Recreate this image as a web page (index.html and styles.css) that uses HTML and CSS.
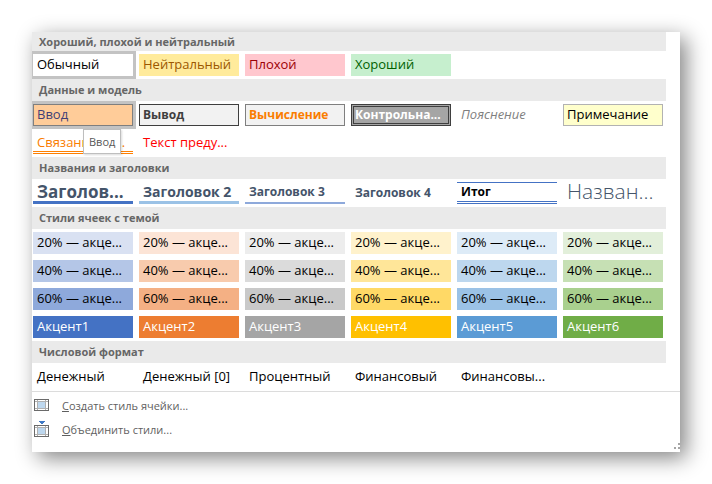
FILE: index.html
```html
<!DOCTYPE html>
<html lang="ru">
<head>
    <meta charset="UTF-8">
    <meta name="viewport" content="width=device-width, initial-scale=1.0">
    <title>Стили ячеек</title>
    <link rel="stylesheet" href="styles.css">
</head>
<body>
    <div class="panel">
        <div class="gallery">
            <h2 class="heading">Хороший, плохой и нейтральный</h2>
            <div class="grid">
                <button type="button" class="cell normal selected">Обычный</button>
                <button type="button" class="cell neutral">Нейтральный</button>
                <button type="button" class="cell bad">Плохой</button>
                <button type="button" class="cell good">Хороший</button>
            </div>

            <h2 class="heading">Данные и модель</h2>
            <div class="grid">
                <div class="cell-wrap">
                    <button type="button" class="cell input selected" aria-describedby="tip">Ввод</button>
                    <span class="tooltip" id="tip" role="tooltip">Ввод</span>
                </div>
                <button type="button" class="cell output">Вывод</button>
                <button type="button" class="cell calc">Вычисление</button>
                <button type="button" class="cell check">Контрольна...</button>
                <button type="button" class="cell explain">Пояснение</button>
                <button type="button" class="cell note">Примечание</button>
                <button type="button" class="cell linked">Связанная я...</button>
                <button type="button" class="cell warning">Текст преду...</button>
            </div>

            <h2 class="heading">Названия и заголовки</h2>
            <div class="grid">
                <button type="button" class="cell title title1">Заголов...</button>
                <button type="button" class="cell title title2">Заголовок 2</button>
                <button type="button" class="cell title title3">Заголовок 3</button>
                <button type="button" class="cell title title4">Заголовок 4</button>
                <button type="button" class="cell total">Итог</button>
                <button type="button" class="cell name">Назван...</button>
            </div>

            <h2 class="heading">Стили ячеек с темой</h2>
            <div class="grid">
                <button type="button" class="cell blue-20">20% — акце...</button>
                <button type="button" class="cell orange-20">20% — акце...</button>
                <button type="button" class="cell gray-20">20% — акце...</button>
                <button type="button" class="cell gold-20">20% — акце...</button>
                <button type="button" class="cell sky-20">20% — акце...</button>
                <button type="button" class="cell green-20">20% — акце...</button>

                <button type="button" class="cell blue-40">40% — акце...</button>
                <button type="button" class="cell orange-40">40% — акце...</button>
                <button type="button" class="cell gray-40">40% — акце...</button>
                <button type="button" class="cell gold-40">40% — акце...</button>
                <button type="button" class="cell sky-40">40% — акце...</button>
                <button type="button" class="cell green-40">40% — акце...</button>

                <button type="button" class="cell blue-60">60% — акце...</button>
                <button type="button" class="cell orange-60">60% — акце...</button>
                <button type="button" class="cell gray-60">60% — акце...</button>
                <button type="button" class="cell gold-60">60% — акце...</button>
                <button type="button" class="cell sky-60">60% — акце...</button>
                <button type="button" class="cell green-60">60% — акце...</button>

                <button type="button" class="cell accent blue">Акцент1</button>
                <button type="button" class="cell accent orange">Акцент2</button>
                <button type="button" class="cell accent gray">Акцент3</button>
                <button type="button" class="cell accent gold">Акцент4</button>
                <button type="button" class="cell accent sky">Акцент5</button>
                <button type="button" class="cell accent green">Акцент6</button>
            </div>

            <h2 class="heading">Числовой формат</h2>
            <div class="grid">
                <button type="button" class="cell">Денежный</button>
                <button type="button" class="cell">Денежный [0]</button>
                <button type="button" class="cell">Процентный</button>
                <button type="button" class="cell">Финансовый</button>
                <button type="button" class="cell">Финансовы...</button>
            </div>
        </div>

        <div class="menu">
            <button type="button" class="menu-item">
                <svg class="icon" width="16" height="18" viewBox="0 0 16 18" shape-rendering="crispEdges" aria-hidden="true">
                    <rect x="1" y="4" width="14" height="11" fill="#fff"/>
                    <rect x="4" y="6" width="8" height="6" fill="#bdd7ee"/>
                    <path d="M3.5 4v11M11.5 4v11M1 5.5h14M1 12.5h14" stroke="#b0b0b0" fill="none"/>
                    <rect x="0.5" y="3.5" width="14" height="11" stroke="#6a6a6a" fill="none"/>
                </svg>
                <span><u>С</u>оздать стиль ячейки...</span>
            </button>
            <button type="button" class="menu-item">
                <svg class="icon" width="16" height="18" viewBox="0 0 16 18" shape-rendering="crispEdges" aria-hidden="true">
                    <rect x="1" y="6" width="14" height="11" fill="#fff"/>
                    <rect x="4" y="8" width="8" height="6" fill="#bdd7ee"/>
                    <path d="M3.5 6v11M11.5 6v11M1 7.5h14M1 14.5h14" stroke="#b0b0b0" fill="none"/>
                    <rect x="0.5" y="5.5" width="14" height="11" stroke="#6a6a6a" fill="none"/>
                    <path d="M5 1h6v1h-1v1h-1v1h-2v-1h-1v-1h-1z" fill="#3f78c4"/>
                </svg>
                <span><u>О</u>бъединить стили...</span>
            </button>
            <svg class="grip" width="6" height="6" viewBox="0 0 6 6" shape-rendering="crispEdges" aria-hidden="true">
                <path d="M4 0h2v2h-2zM0 4h2v2h-2zM4 4h2v2h-2z" fill="#a6a6a6"/>
            </svg>
        </div>
    </div>
</body>
</html>
```
FILE: styles.css
```css
body {
    margin: 0;
    padding: 32px;
    background: #fff;
    font-family: "Open Sans", "Noto Sans", sans-serif;
}
button {
    font-family: inherit;
    text-align: left;
    cursor: pointer;
}
.panel {
    position: relative;
    background: #fff;
    box-shadow: 6px 6px 20px #848484;
}
.gallery {
    padding-right: 14px;
}
.heading {
    margin: 0;
    padding-left: 7px;
    background: #eaeaea;
    color: #666;
    font-size: 11px;
    font-weight: 700;
    line-height: 22px;
}
.heading:first-child {
    line-height: 19px;
}
.grid {
    display: grid;
    grid-template-columns: repeat(6, minmax(0, 1fr));
    gap: 6px;
    padding: 3px 3px 3px 1px;
    overflow: hidden;
}
.cell {
    display: flex;
    align-items: center;
    box-sizing: border-box;
    width: 100%;
    height: 22px;
    padding: 0 4px 2px;
    border: 0 solid transparent;
    background: transparent;
    color: #000;
    font-size: 13px;
    line-height: 18px;
    white-space: nowrap;
}
.cell-wrap {
    position: relative;
}
.selected {
    box-shadow: 0 0 0 3px #c3c3c3;
}
.tooltip {
    position: absolute;
    left: 50px;
    top: 25px;
    z-index: 1;
    padding: 0 5px;
    border: 1px solid #bebebe;
    background: #fff;
    box-shadow: 1px 1px 2px rgba(0, 0, 0, 0.15);
    color: #575757;
    font-size: 11px;
    line-height: 23px;
}

/* good, bad and neutral */
.normal { background: #fff; }
.neutral { background: #ffeb9c; color: #9c5700; }
.bad { background: #ffc7ce; color: #9c0006; }
.good { background: #c6efce; color: #006100; }

/* data and model */
.input,
.output,
.calc,
.note {
    border-width: 1px;
    padding: 0 3px 2px;
}
.output,
.calc,
.check {
    padding-bottom: 0;
    font-size: 12px;
    font-weight: 700;
}
.input { background: #ffcc99; border-color: #7f7f7f; color: #3f3f76; }
.output { background: #f2f2f2; border-color: #3f3f3f; color: #3f3f3f; }
.calc { background: #f2f2f2; border-color: #7f7f7f; color: #fa7d00; }
.note { background: #ffffcc; border-color: #b2b2b2; }
.check {
    padding: 0 1px;
    border: 3px double #3f3f3f;
    background: #a5a5a5;
    color: #fff;
}
.explain { color: #7f7f7f; font-style: italic; }
.linked { padding-bottom: 0; border-bottom: 3px double #ff8001; color: #fa7d00; }
.warning { color: #ff0000; }

/* titles */
.title {
    padding-bottom: 0;
    color: #44546a;
    font-size: 12px;
    font-weight: 700;
}
.title1 { border-bottom: 3px solid #4472c4; font-size: 17px; }
.title2 { border-bottom: 3px solid #9bc2e6; font-size: 14px; }
.title3 { border-bottom: 2px solid #8ea9db; }
.total {
    padding-bottom: 0;
    border-top: 1px solid #4472c4;
    border-bottom: 3px double #4472c4;
    font-size: 12px;
    font-weight: 700;
}
.name { padding-bottom: 4px; color: #44546a; font-size: 21px; font-weight: 300; }

/* theme accents */
.blue-20 { background: #d9e1f2; }
.blue-40 { background: #b4c6e7; }
.blue-60 { background: #8ea9db; }
.blue { background: #4472c4; }
.orange-20 { background: #fce4d6; }
.orange-40 { background: #f8cbad; }
.orange-60 { background: #f4b084; }
.orange { background: #ed7d31; }
.gray-20 { background: #ededed; }
.gray-40 { background: #dbdbdb; }
.gray-60 { background: #c9c9c9; }
.gray { background: #a5a5a5; }
.gold-20 { background: #fff2cc; }
.gold-40 { background: #ffe699; }
.gold-60 { background: #ffd966; }
.gold { background: #ffc000; }
.sky-20 { background: #ddebf7; }
.sky-40 { background: #bdd7ee; }
.sky-60 { background: #9bc2e6; }
.sky { background: #5b9bd5; }
.green-20 { background: #e2efda; }
.green-40 { background: #c6e0b4; }
.green-60 { background: #a9d08e; }
.green { background: #70ad47; }
.accent { color: #fff; }

.menu {
    position: relative;
    padding: 1px 0 11px;
    border-top: 1px solid #dcdcdc;
}
.menu-item {
    display: flex;
    align-items: center;
    gap: 12px;
    width: 100%;
    height: 24px;
    padding: 0 2px;
    border: 0;
    background: transparent;
    color: #5f5f5f;
    font-size: 11px;
}
.grip {
    position: absolute;
    right: 0;
    bottom: 3px;
}
```
